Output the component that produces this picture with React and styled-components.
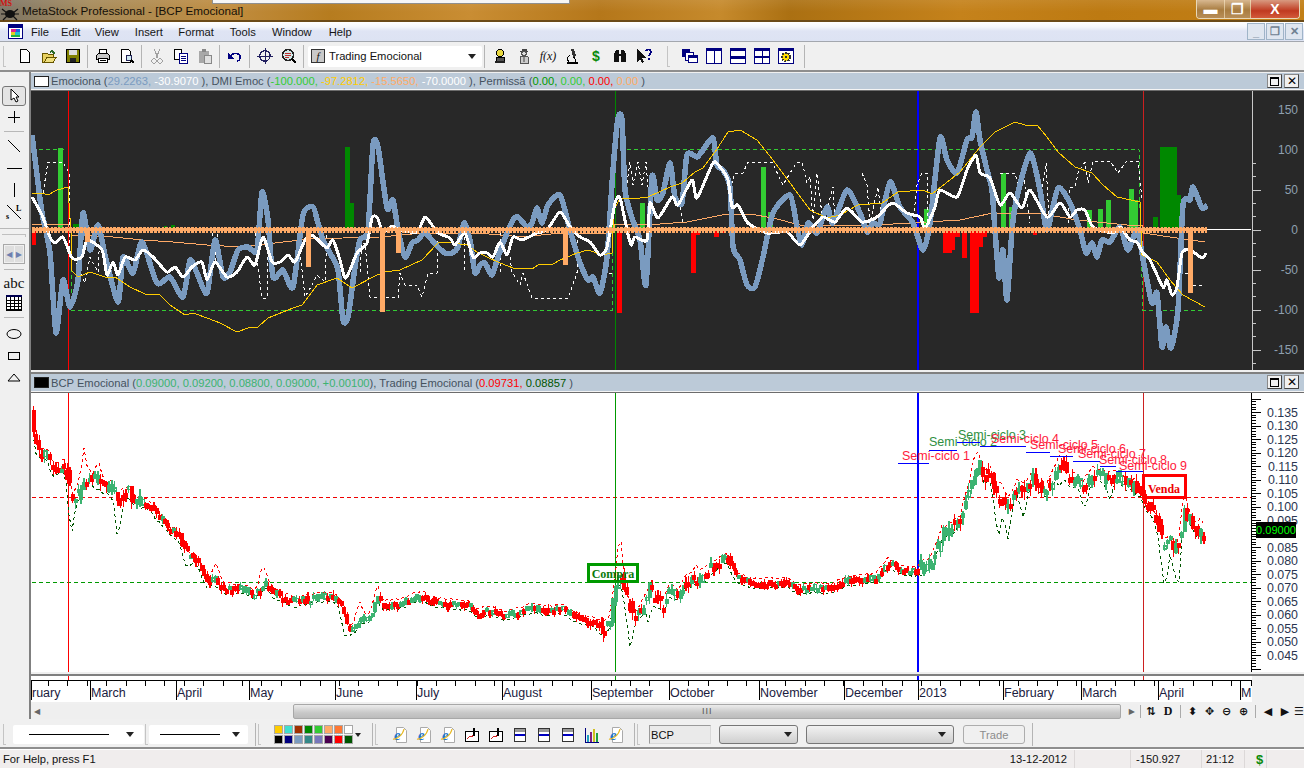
import styled, { createGlobalStyle } from "styled-components"

const GlobalStyle = createGlobalStyle`
  html, body { margin: 0; padding: 0; background: #f0f0f0; }
  * { box-sizing: border-box; }
`

const FONT = `"Liberation Sans", Arial, sans-serif`

const Page = styled.div`
  width: 1304px;
  height: 768px;
  overflow: hidden;
  display: flex;
  flex-direction: column;
  background: #f0f0f0;
  font-family: ${FONT};
  font-size: 11.2px;
  color: #111;
`

/* ---------- title + menu ---------- */
const TitleBar = styled.div`
  position: relative;
  height: 22px;
  flex: none;
  display: flex;
  align-items: center;
  padding-left: 22px;
  font-size: 11.7px;
  color: #151008;
  background:
    linear-gradient(180deg, rgba(255,255,255,.08), rgba(0,0,0,0) 60%),
    linear-gradient(90deg, #7d7566 0, #a58a5a 90px, #c08c3e 230px, #b67c1f 330px, #c98d33 470px, #b5771a 600px, #c68a2c 720px, #ab7012 790px, #c5821b 960px, #bd7a12 1100px, #c27f16 1304px);
  border-bottom: 2px solid #6b4a18;
`
const BehindWindow = styled.div`
  position: absolute;
  left: 212px;
  top: 0;
  width: 358px;
  height: 4px;
  background: #f6f6f6;
  border: 1px solid #8f8f8f;
  border-top: 0;
`
const AppLogo = styled.div`
  position: absolute;
  left: 0;
  top: 1px;
  width: 20px;
  height: 20px;
`
const LogoMark = styled.span`
  position: absolute;
  left: 0;
  top: -2px;
  font: bold 8px "Liberation Serif", serif;
  color: #d01010;
`
const WinButtons = styled.div`
  position: absolute;
  right: 4px;
  top: 0;
  height: 19px;
  display: flex;
  border: 1px solid #e8d8b8;
  border-top: 0;
  border-radius: 0 0 4px 4px;
  overflow: hidden;
`
const WinBtn = styled.div`
  width: ${p => p.$w}px;
  display: flex;
  align-items: center;
  justify-content: center;
  color: #fff;
  font: bold 14px ${FONT};
  background: ${p => p.$close
    ? "linear-gradient(180deg,#d89a80,#c03a20 60%,#d25a3a)"
    : "linear-gradient(180deg,#d8b890,#a87c40 55%,#b88e58)"};
  border-right: 1px solid rgba(255,240,210,.55);
  &:last-child { border-right: 0; }
`
const MenuBar = styled.div`
  height: 20px;
  flex: none;
  position: relative;
  display: flex;
  align-items: center;
  background: linear-gradient(180deg, #ffffff 0, #f4f6fc 5px, #dfe4f4 9px, #dde3f3 100%);
  border-bottom: 1px solid #a3a7ae;
`
const MenuIcon = styled.div`
  width: 15px;
  height: 15px;
  margin: 0 8px 0 8px;
`
const MenuItem = styled.span`
  margin-right: ${p => p.$mr}px;
  color: #161616;
`
const ChildBtns = styled.div`
  position: absolute;
  right: 1px;
  top: 1px;
  display: flex;
  gap: 1px;
`
const ChildBtn = styled.div`
  width: 18px;
  height: 17px;
  display: flex;
  align-items: center;
  justify-content: center;
  border: 1px solid #9fb4c8;
  background: #dfe6f0;
  color: #6f8192;
  font: bold 11px ${FONT};
`

/* ---------- toolbars ---------- */
const ToolBar = styled.div`
  height: 30px;
  flex: none;
  display: flex;
  align-items: center;
  padding: ${p => p.$pt ?? 0}px 0 0 3px;
  background: #f0f0f0;
  border-bottom: 2px solid #8e8e8e;
`
const Grip = styled.div`
  width: 3px;
  height: 21px;
  flex: none;
  margin: 0 ${p => p.$mr ?? 7}px 0 ${p => p.$ml ?? 0}px;
  border-left: 1px solid #c4c4c4;
  border-bottom: 1px solid #c4c4c4;
`
const Sep = styled.div`
  width: 1px;
  height: 23px;
  flex: none;
  margin: 0 ${p => p.$mr ?? 3}px 0 ${p => p.$ml ?? 2}px;
  background: #b4b4b4;
`
const ToolBtn = styled.div`
  width: 24px;
  height: 20px;
  flex: none;
  display: flex;
  align-items: center;
  justify-content: center;
  color: ${p => p.$c || "#111"};
  font: ${p => p.$font || `bold 13px ${FONT}`};
`
const TemplateCombo = styled.div`
  width: 174px;
  height: 21px;
  flex: none;
  margin-left: 1px;
  display: flex;
  align-items: center;
  padding: 0 3px;
  background: #fff;
  border-radius: 2px;
`
const FormulaBox = styled.span`
  width: 14px;
  height: 14px;
  flex: none;
  margin-right: 4px;
  display: flex;
  align-items: center;
  justify-content: center;
  border: 1px solid #333;
  background: #c9c9c9;
  font: italic 11px "Liberation Serif", serif;
`
const Caret = styled.span`
  width: 0;
  height: 0;
  flex: none;
  margin-left: auto;
  margin-right: ${p => p.$mr ?? 1}px;
  border-left: 4px solid transparent;
  border-right: 4px solid transparent;
  border-top: 5px solid #222;
`
const SwatchCaret = styled.span`
  width: 0;
  height: 0;
  flex: none;
  margin: 0 3px 0 2px;
  border-left: 3px solid transparent;
  border-right: 3px solid transparent;
  border-top: 4px solid #222;
`
const LineCombo = styled.div`
  width: ${p => p.$w}px;
  height: 19px;
  flex: none;
  margin-right: ${p => p.$mr ?? 0}px;
  display: flex;
  align-items: center;
  padding: 0 5px 0 ${p => p.$pl}px;
  background: #fff;
  border-radius: 2px;
`
const LineSample = styled.span`
  width: ${p => p.$w}px;
  height: 1px;
  background: #000;
`
const Swatches = styled.div`
  width: 80px;
  flex: none;
  display: grid;
  grid-template-columns: repeat(8, 10px);
  grid-auto-rows: 10px;
`
const Swatch = styled.span`
  margin: 0.5px;
  background: ${p => p.$c};
  border: 1px solid #a8a8a8;
  ${p => p.$on && "outline: 1px dotted #fff;"}
`
const SymbolBox = styled.div`
  width: 62px;
  height: 19px;
  flex: none;
  margin-right: 8px;
  padding: 2px 1px;
  background: #eaeaea;
  border: 1px solid #9a9a9a;
  border-right-color: #d8d8d8;
  border-bottom-color: #d8d8d8;
  line-height: 14px;
`
const DropDown = styled.div`
  width: ${p => p.$w}px;
  height: 19px;
  flex: none;
  margin-right: ${p => p.$mr}px;
  display: flex;
  align-items: center;
  padding-right: 4px;
  background: linear-gradient(180deg, #f2f2f2, #cfcfcf);
  border: 1px solid #777;
  border-radius: 3px;
`
const TradeBtn = styled.div`
  width: 62px;
  height: 19px;
  flex: none;
  display: flex;
  align-items: center;
  justify-content: center;
  border: 1px solid #adadad;
  border-radius: 3px;
  color: #8c8c8c;
`
const StatusBar = styled.div`
  height: 19px;
  flex: 1;
  display: flex;
  align-items: center;
  background: #f0eded;
  border-top: 1px solid #fff;
  font-size: 11.2px;
`
const StatusCell = styled.div`
  width: ${p => p.$w}px;
  flex: ${p => (p.$w ? "none" : 1)};
  height: 100%;
  display: flex;
  align-items: center;
  justify-content: ${p => p.$between ? "space-between" : "flex-start"};
  padding: 0 ${p => p.$between ? 7 : 3}px 0 ${p => p.$pl ?? 3}px;
  border-right: 1px solid #dcd8d8;
  &:last-child { border-right: 0; }
`
const StatusDollar = styled.span`
  margin-left: 8px;
  color: #0a8a0a;
  font: bold 13px ${FONT};
`

/* ---------- workspace ---------- */
const Workspace = styled.div`
  height: 647px;
  flex: none;
  display: flex;
`
const SideBar = styled.div`
  width: 31px;
  flex: none;
  display: flex;
  flex-direction: column;
  align-items: center;
  padding: 14px 1px 0 0;
  background: #f0f0f0;
  border-right: 2px solid #808080;
`
const SideBtn = styled.div`
  width: ${p => p.$active ? 24 : 22}px;
  height: ${p => p.$h ?? 22}px;
  flex: none;
  display: flex;
  align-items: center;
  justify-content: center;
  ${p => p.$active && "background:#e4e4e4;border:1px solid #777;border-radius:3px;"}
  font: 15px "Liberation Serif", serif;
`
const SideRule = styled.div`
  flex: none;
  width: ${p => p.$full ? 30 : 20}px;
  height: 1px;
  margin: ${p => p.$my ?? 2}px 0;
  background: #b8b8b8;
`
const SideGrip = styled.div`
  width: 24px;
  height: 3px;
  flex: none;
  border-top: 1px solid #c0c0c0;
  border-right: 1px solid #c0c0c0;
`
const SideSpin = styled.div`
  width: 22px;
  height: 20px;
  flex: none;
  margin: 7px 0 3px;
  display: flex;
  justify-content: center;
  gap: 1px;
  padding: 1px;
  border: 1px solid #a8a8a8;
  color: #6e7fb0;
  font: 8px "DejaVu Sans", sans-serif;
`
const SpinCell = styled.span`
  flex: 1;
  display: flex;
  align-items: center;
  justify-content: center;
  background: #dedede;
`
const Main = styled.div`
  flex: 1;
  min-width: 0;
  display: flex;
  flex-direction: column;
  padding-top: 1px;
`
const PanelHead = styled.div`
  height: ${p => p.$h}px;
  flex: none;
  position: relative;
  display: flex;
  align-items: center;
  padding-left: 3px;
  background: #bccad8;
  white-space: pre;
  font-size: 11.2px;
  color: #45525f;
`
const PanelSwatch = styled.span`
  width: 15px;
  height: 11px;
  flex: none;
  margin-right: 2px;
  background: ${p => p.$c};
  border: 1px solid #222;
`
const Val = styled.span`
  color: ${p => p.$c};
`
const PanelBtns = styled.div`
  position: absolute;
  right: 5px;
  top: 1px;
  display: flex;
  gap: 2px;
`
const PanelBtn = styled.div`
  width: 15px;
  height: 14px;
  display: flex;
  align-items: center;
  justify-content: center;
  background: #f0f0f0;
  border: 1px solid #8a8a8a;
  border-right-color: #444;
  border-bottom-color: #444;
  color: #000;
  font: 12px ${FONT};
`
const MaxGlyph = styled.span`
  width: 9px;
  height: 9px;
  border: 1px solid #000;
  border-top-width: 2px;
`
const HeadRule = styled.div`
  height: ${p => p.$h}px;
  flex: none;
  background: #f4f4f4;
  border-bottom: 1px solid #6c6c6c;
`
const GapRule = styled.div`
  height: ${p => p.$h}px;
  flex: none;
  background: #f0f0f0;
  border-bottom: 2px solid #808080;
`
const ChartSvg = styled.svg`
  display: block;
  flex: none;
  width: 1273px;
  height: ${p => p.$h}px;
  background: ${p => p.$bg};
`
const AxisRow = styled.div`
  height: 26px;
  flex: none;
  display: flex;
  background: #f0f0f0;
`
const AxisSvg = styled.svg`
  display: block;
  width: 1221px;
  height: 26px;
  background: #fff;
`
const ScrollRow = styled.div`
  height: 16px;
  flex: none;
  margin-top: 1px;
  display: flex;
  align-items: center;
`
const ScrollTrack = styled.div`
  width: 1107px;
  height: 15px;
  flex: none;
  display: flex;
  align-items: center;
  padding: 0 3px;
  background: #efefef;
  color: #666;
  font: 8px "DejaVu Sans", sans-serif;
`
const ScrollThumb = styled.div`
  width: 828px;
  height: 15px;
  margin-left: 253px;
  display: flex;
  align-items: center;
  justify-content: center;
  background: linear-gradient(180deg, #ececec, #c8c8c8 60%, #bcbcbc);
  border: 1px solid #a8a8a8;
  border-radius: 2px;
  color: #555;
  font: 9px ${FONT};
  letter-spacing: 1px;
`
const ScrollEnd = styled.span`
  margin-left: auto;
`
const ZoomTools = styled.div`
  flex: 1;
  display: flex;
  align-items: center;
`
const ZoomTool = styled.span`
  width: ${p => p.$w ?? 17}px;
  flex: none;
  text-align: center;
  color: #111;
  font: ${p => p.$font || `bold 11px "DejaVu Sans", sans-serif`};
`
const ZoomSep = styled.span`
  width: 1px;
  height: 13px;
  flex: none;
  margin: 0 ${p => p.$m ?? 4}px;
  background: #aaa;
`

/* ---------- chart data (page coordinates) ---------- */
const emociona = "32,135 37,175 42,213 50,253 56,333 63,280 70,307 78,280 83,213 90,250 98,225 105,255 118,302 123,257 133,273 142,242 157,283 170,277 183,297 190,260 197,273 207,293 215,240 223,277 230,272 238,250 248,247 257,250 262,192 268,220 273,277 283,270 293,287 303,215 313,207 318,223 323,240 330,253 338,270 343,320 348,317 355,267 360,240 368,230 373,145 378,147 387,208 393,200 398,230 405,257 412,243 418,240 425,233 438,247 445,253 452,253 458,247 464,223 470,240 475,273 480,265 485,263 492,275 498,257 507,233 513,220 518,217 527,227 532,223 537,208 542,223 548,205 560,195 570,230 580,263 588,280 593,277 600,293 607,257 613,170 618,118 622,120 625,190 632,218 640,240 646,285 652,177 657,200 663,193 670,163 675,197 682,203 687,155 697,157 703,150 713,138 717,165 723,170 730,187 733,247 740,260 747,285 755,287 763,257 773,213 790,195 797,227 802,245 808,223 817,233 827,207 833,223 847,190 860,213 867,232 873,223 880,223 890,182 900,207 913,223 923,250 930,223 940,138 947,160 957,173 967,140 972,137 976,112 980,140 987,170 992,190 995,230 999,278 1003,250 1007,300 1012,230 1017,197 1030,153 1040,190 1047,230 1058,188 1070,203 1080,230 1086,253 1092,243 1097,257 1102,240 1110,242 1120,227 1128,250 1137,230 1145,270 1152,303 1157,293 1162,347 1166,327 1171,348 1178,310 1183,205 1190,200 1193,187 1202,208 1207,205"
const dmiWhite = "32,197 42,215 50,237 55,243 63,237 72,258 82,257 87,240 102,250 107,275 113,262 118,275 125,257 135,260 143,250 153,257 167,272 175,267 183,277 192,267 202,262 207,280 215,262 227,277 237,272 247,257 255,265 263,237 272,262 280,262 288,255 295,262 305,240 312,235 320,242 327,248 333,240 340,260 345,278 350,270 357,253 367,243 372,218 377,217 382,230 387,230 392,226 400,230 417,232 425,217 432,225 438,233 450,238 455,245 465,233 473,257 480,253 487,253 493,257 500,242 507,255 513,237 522,240 537,233 547,230 560,212 570,227 580,237 590,242 600,255 607,247 615,203 620,198 627,230 631,245 635,237 647,240 650,203 658,218 672,197 678,205 692,180 697,198 713,163 720,167 728,180 732,207 738,205 748,223 767,233 787,232 800,245 813,227 823,217 835,222 847,208 862,222 877,217 892,203 907,213 920,217 925,228 935,207 940,190 957,197 967,170 976,155 980,173 990,178 1000,205 1010,193 1022,208 1030,190 1047,217 1060,203 1070,217 1077,210 1085,210 1093,227 1113,233 1120,227 1130,240 1137,242 1143,253 1150,260 1163,287 1167,280 1172,295 1177,287 1182,253 1190,250 1202,258 1206,253"
const yellowLine = "32,194 42,193 48,195 57,190 68,187 71,233 71,270 78,277 90,272 105,277 115,277 130,287 145,294 160,295 170,305 185,315 193,313 207,318 220,323 237,332 248,328 258,327 268,318 283,312 293,308 302,305 312,292 317,285 337,278 352,288 377,275 385,272 400,270 422,260 438,243 447,242 467,245 477,252 487,257 500,263 513,268 532,269 538,265 553,264 560,260 577,253 588,250 602,255 612,253 614,210 620,198 640,198 648,197 670,187 682,183 695,172 703,168 715,152 728,132 740,130 757,140 773,160 793,187 810,210 827,218 840,215 858,205 882,203 898,192 923,190 932,194 960,172 980,147 995,132 1015,122 1025,125 1037,125 1047,137 1058,152 1075,167 1092,173 1103,185 1117,197 1140,202 1142,255 1157,262 1170,280 1183,295 1205,307"
const orangeLine = "32,224 50,224 68,224 72,235 113,237 143,240 173,242 207,245 240,247 260,245 283,242 310,239 343,238 380,237 423,233 477,233 523,237 560,233 612,233 615,224 660,224 687,222 727,214 750,214 773,218 800,225 877,225 910,223 960,220 993,213 1043,214 1077,220 1127,225 1142,225 1143,233 1177,238 1205,242"
const whiteDashes = [
  "43,193 48,162 63,162 69,173 69,247 85,283 90,257 98,272 100,233",
  "212,233 215,262 218,233",
  "255,233 258,267 262,298 267,298 268,233",
  "298,233 305,297 312,285 317,275 325,282 327,233",
  "360,272 362,243 365,243 370,297 398,298 400,273 405,285 417,285 422,297 428,273 437,273 438,240",
  "464,237 465,273",
  "500,233 500,273",
  "510,257 512,272 520,285 523,273 532,298 568,298 577,273 578,237",
  "607,233 607,273 612,273",
  "627,183 630,162 633,185 638,162 642,185 646,162 648,187 650,210",
  "680,207 683,225",
  "730,190 735,173 743,173 748,162 772,162 783,185 790,173 797,162 802,162 807,183 810,177 813,220 817,173 823,223 833,187 835,223",
  "862,173 867,185 870,223 878,187 882,223",
  "913,223 917,185 922,173 927,173 928,223",
  "1000,173 1015,173 1018,185 1023,173 1030,223",
  "1042,187 1046,163 1048,200 1048,223",
  "1068,223 1070,187 1075,187 1078,173 1085,162 1088,183 1093,161 1110,161 1118,173 1127,161 1138,161 1142,200",
  "1185,273 1189,273",
  "1193,285 1203,285",
]
const greenDashes = [
  "32,149.5 65,149.5",
  "71,240 71,310 612,310 612,233 614,170",
  "620,149.5 1139,149.5 1140,210 1143,310 1205,310",
]
// x, width, top or bottom
const limeBars = [[58,5,148],[640,5,203],[761,5,167],[768,5,212],[924,5,209],[1001,5,173],[1009,5,207],[1087,5,210],[1098,5,209],[1106,5,200],[1129,5,189],[1134,4,200]]
const darkBars = [[345,5,147],[350,4,203],[1153,5,217],[1160,17,147],[1177,4,195],[73,9,224],[164,3,226],[171,4,225]]
const redBars = [[32,4,245],[617,5,313],[691,5,273],[696,4,235],[714,5,237],[723,3,233],[943,9,253],[952,3,250],[955,5,237],[962,5,258],[970,9,313],[979,4,247],[983,4,237],[1033,4,235]]
const orangeBars = [[85,5,242],[306,5,267],[380,5,312],[396,5,253],[563,5,265],[1188,5,293]]

const rangeStep = (from, to, step) => {
  const out = []
  for (let v = from; v <= to + 0.001; v += step) out.push(v)
  return out
}

// catmull-rom through the points, the thick lines are not angular in the picture
const smooth = str => {
  const pts = str.split(" ").map(s => s.split(",").map(Number))
  let d = `M${pts[0][0]} ${pts[0][1]}`
  for (let i = 0; i < pts.length - 1; i++) {
    const a = pts[Math.max(i - 1, 0)]
    const b = pts[i]
    const c = pts[i + 1]
    const e = pts[Math.min(i + 2, pts.length - 1)]
    d += `C${b[0] + (c[0] - a[0]) / 9} ${b[1] + (c[1] - a[1]) / 9} ${c[0] - (e[0] - b[0]) / 9} ${c[1] - (e[1] - b[1]) / 9} ${c[0]} ${c[1]}`
  }
  return d
}

const priceKeys = [[32,425],[37,450],[40,453],[43,453],[48,457],[52,468],[57,470],[62,465],[65,468],[68,480],[71,497],[77,495],[82,490],[83,477],[88,477],[98,482],[105,488],[113,487],[117,500],[122,497],[127,490],[133,500],[140,502],[147,503],[157,515],[162,520],[170,530],[178,535],[183,547],[188,555],[197,560],[202,573],[207,582],[215,580],[223,587],[230,588],[238,588],[248,590],[253,595],[260,588],[267,583],[273,592],[283,597],[297,602],[303,600],[320,597],[333,597],[340,603],[347,627],[353,630],[360,620],[370,617],[377,597],[383,605],[400,603],[421,595],[434,602],[469,605],[476,613],[489,610],[507,615],[531,608],[548,610],[562,608],[575,617],[593,622],[603,628],[610,623],[614,590],[620,573],[624,593],[630,608],[634,617],[641,608],[648,600],[649,587],[656,600],[663,605],[670,590],[679,595],[685,580],[699,580],[711,568],[722,558],[727,557],[732,570],[739,578],[751,583],[772,582],[789,583],[799,590],[813,587],[830,588],[847,580],[875,578],[888,562],[899,568],[914,572],[922,566],[930,563],[937,547],[942,533],[952,525],[960,522],[967,497],[973,473],[979,460],[983,477],[990,473],[997,497],[1007,503],[1017,487],[1025,490],[1032,477],[1040,488],[1047,490],[1053,477],[1060,460],[1068,478],[1077,480],[1083,488],[1092,473],[1102,477],[1110,478],[1118,475],[1127,483],[1138,488],[1147,503],[1157,523],[1162,543],[1165,543],[1170,540],[1173,553],[1180,540],[1183,513],[1190,520],[1197,530],[1205,532]]

const priceAt = x => {
  for (let i = 1; i < priceKeys.length; i++) {
    const [x0, y0] = priceKeys[i - 1]
    const [x1, y1] = priceKeys[i]
    if (x <= x1) return y0 + (y1 - y0) * (x - x0) / (x1 - x0)
  }
  return priceKeys[priceKeys.length - 1][1]
}
const swing = x => {
  if (x < 140) return 12
  if (x < 340) return 7
  if (x < 600) return 5.5
  if (x < 720) return 12
  if (x < 920) return 5.5
  return 13
}
let seed = 4711
const rnd = () => {
  seed = (seed * 16807) % 2147483647
  return seed / 2147483647
}
const candles = rangeStep(33, 1205, 2.8).map(x => {
  const y = priceAt(x)
  const prev = priceAt(x - 2.8)
  const v = swing(x)
  const open = prev + (rnd() - 0.5) * v
  const close = y + (rnd() - 0.5) * v
  const top = Math.min(open, close)
  const down = close >= open - 0.6
  const h = Math.max(Math.abs(close - open), down ? 5 : 3)
  return { x, top, h, down, hi: top - rnd() * v * 0.6, lo: top + h + rnd() * v * 0.6 }
})
const bump = (x, list) => list.reduce((sum, [c, m]) => sum + m * Math.exp(-((x - c) ** 2) / 14), 0)
const upBumps = [[83,25],[99,15],[216,14],[263,15],[359,15],[377,10],[620,34],[650,8],[697,8],[975,10],[1000,12],[1185,14],[1200,8]]
const lowBumps = [[71,30],[118,28],[186,8],[344,12],[630,30],[650,18],[998,30],[1008,30],[1023,24],[1060,18],[1085,15],[1110,15],[1165,38],[1178,34]]
const upperEnv = rangeStep(33, 1205, 3).map(x => `${x},${(priceAt(x) - 3 - rnd() * swing(x) * 0.4 - bump(x, upBumps)).toFixed(1)}`).join(" ")
const lowerEnv = rangeStep(33, 1205, 3).map(x => `${x},${(priceAt(x) + 4 + rnd() * swing(x) * 0.4 + bump(x, lowBumps)).toFixed(1)}`).join(" ")

const semi = [
  ["Semi-ciclo 1", 902, 460, "#ff1a3c", 898, 929, 463],
  ["Semi-ciclo 2", 929, 446, "#2f8f3f", 929, 957, 450],
  ["Semi-ciclo 3", 958, 439, "#2f8f3f", 957, 980, 442],
  ["Semi-ciclo 4", 991, 443, "#ff1a3c", 980, 1026, 446],
  ["Semi-ciclo 5", 1030, 449, "#ff1a3c", 1026, 1050, 452],
  ["Semi-ciclo 6", 1058, 453, "#ff1a3c", 1050, 1073, 456],
  ["Semi-ciclo 7", 1078, 458, "#ff1a3c", 1073, 1100, 461],
  ["Semi-ciclo 8", 1099, 464, "#ff1a3c", 1100, 1116, 466],
  ["Semi-ciclo 9", 1119, 470, "#ff1a3c", 1116, 1143, 471],
]
const months = [["ruary",32],["March",91],["April",177],["May",250],["June",336],["July",417],["August",503],["September",592],["October",670],["November",760],["December",845],["2013",919],["February",1004],["March",1082],["April",1159],["M",1241]]
const row1 = ["#ffcc00","#40e0d0","#a03000","#008800","#33cc33","#ffaa66","#ff7733","#ffffff"]
const row2 = ["#000000","#000080","#7a9bc0","#338888","#7777bb","#4b0050","#ff0000","#005500"]

const Icon = ({ children, size = 16 }) => (
  <svg width={size} height={size} viewBox="0 0 16 16" shapeRendering="crispEdges">{children}</svg>
)
const NewIcon = () => <Icon><path d="M3.5 1.5h6l3 3v10h-9z" fill="#fff" stroke="#000" /></Icon>
const OpenIcon = () => <Icon><path d="M1.5 5.5h5l1 1h5v8h-11z" fill="#e8d060" stroke="#665500" /><path d="M3 14.5l3-5h9l-3 5z" fill="#f0e080" stroke="#665500" /><path d="M9 3c2-2 3-1 4 1l1-1v3h-3l1-1c-1-1-2-1-3 0z" fill="#2a6a2a" /></Icon>
const SaveIcon = () => <Icon><path d="M1.5 1.5h13v13h-13z" fill="#808000" stroke="#000" /><path d="M4 2h8v5H4z" fill="#ddd" /><path d="M5 10h6v4H5z" fill="#222" /></Icon>
const PrintIcon = () => <Icon><path d="M4.5 1.5h7v5h-7z" fill="#fff" stroke="#000" /><path d="M1.5 7.5l2-2h9l2 2v4h-13z" fill="#c8c8c8" stroke="#000" /><path d="M3.5 10.5h9v4h-9z" fill="#fff" stroke="#000" /><path d="M5 12h6v1H5z" fill="#000" /></Icon>
const PreviewIcon = () => <Icon><path d="M2.5 1.5h7l2 2v11h-9z" fill="#fff" stroke="#000" /><circle cx="10" cy="10" r="3" fill="#cfe8f0" stroke="#225" /><path d="M12 12l3 3" stroke="#000" strokeWidth="2" /></Icon>
const CutIcon = () => <Icon><path d="M5 1l4 9M11 1L7 10" stroke="#a0a0a0" fill="none" /><circle cx="5" cy="13" r="2.2" fill="none" stroke="#a0a0a0" /><circle cx="11" cy="13" r="2.2" fill="none" stroke="#a0a0a0" /></Icon>
const CopyIcon = () => <Icon><path d="M1.5 1.5h7v10h-7z" fill="#fff" stroke="#000" /><path d="M6.5 5.5h8v10h-8z" fill="#fff" stroke="#000080" /><path d="M8 8h5M8 10h5M8 12h5" stroke="#000080" /></Icon>
const PasteIcon = () => <Icon><path d="M2 3h10v12H2z" fill="#a8a8a8" /><path d="M5 1h4v3H5z" fill="#888" /><path d="M7.5 7.5h7v8h-7z" fill="#e0e0e0" stroke="#888" /></Icon>
const UndoIcon = () => <Icon><path d="M3 9c2-4 8-5 10-1 1 3-1 5-3 5" fill="none" stroke="#000080" strokeWidth="1.6" /><path d="M1 5v6h6z" fill="#000080" /></Icon>
const CrossIcon = () => <Icon><circle cx="8" cy="8" r="5.2" fill="none" stroke="#222060" strokeWidth="1.2" /><path d="M8 0v16M0 8h16" stroke="#222060" /></Icon>
const FindIcon = () => <Icon><circle cx="7" cy="7" r="5.4" fill="#cfe8e8" stroke="#222" strokeWidth="1.4" /><path d="M4 5h6M4 7h6M4 9h4" stroke="#c03030" /><path d="M11 11l4 4" stroke="#000" strokeWidth="2.2" /></Icon>
const PawnIcon = () => <Icon><circle cx="8" cy="5" r="3.8" fill="#e8d840" stroke="#000" /><path d="M4 9h8v4H4z" fill="#555" stroke="#000" /><path d="M3 13h10v2H3z" fill="#222" /></Icon>
const ManIcon = () => <Icon><path d="M4 3h8M6 1h4v2H6z" stroke="#444" fill="#444" /><circle cx="8" cy="5.5" r="2.2" fill="#ddd" stroke="#555" /><path d="M4 15V9l4-1 4 1v6z" fill="#ccc" stroke="#555" /><path d="M7 9h2v5H7z" fill="#888" /></Icon>
const ScopeIcon = () => <Icon><path d="M7 1h3l2 7-3 1z" fill="#333" /><path d="M3 14.5h11" stroke="#000" strokeWidth="2" /><path d="M6 7c-3 2-3 5-1 7M9 9c2 1 3 3 2 5" stroke="#000" fill="none" /></Icon>
const BinoIcon = () => <Icon><path d="M2 6l2-4h3v4h2V2h3l2 4v8H9V8H7v6H2z" fill="#111" /></Icon>
const HelpArrowIcon = () => <Icon><path d="M1 1v13l3-3 2 4 2-1-2-4h4z" fill="#111" /><path d="M10 3c1-2 5-2 5 1 0 2-2 2-2 4M13 10v2" stroke="#000080" strokeWidth="1.6" fill="none" /></Icon>
const NavyFrame = ({ children }) => <Icon><rect x=".5" y=".5" width="15" height="15" fill="#fff" stroke="#000080" /><rect x="0" y="0" width="16" height="3" fill="#000080" />{children}</Icon>
const CascadeIcon = () => <Icon><path d="M0 1h8v8H0z" fill="#000080" /><path d="M3 4h8v8H3z" fill="#fff" stroke="#000080" /><path d="M6.5 7.5h9v7h-9z" fill="#fff" stroke="#000080" /><path d="M6 7h10v3H6z" fill="#000080" /></Icon>
const VTileIcon = () => <NavyFrame><path d="M8 0v16" stroke="#000080" /></NavyFrame>
const HTileIcon = () => <NavyFrame><path d="M0 8h16v3H0z" fill="#000080" /></NavyFrame>
const GridIcon = () => <NavyFrame><path d="M8 0v16" stroke="#000080" /><path d="M0 8h16v2H0z" fill="#000080" /></NavyFrame>
const GearIcon = () => <NavyFrame><circle cx="8" cy="9" r="4.2" fill="#ffdd00" stroke="#333" strokeDasharray="2 1" strokeWidth="1.6" /><circle cx="8" cy="9" r="1.2" fill="#333" /></NavyFrame>
const IeIcon = () => (
  <svg width="17" height="18" viewBox="0 0 17 18">
    <path d="M4.5 1.5h7l3 3v12h-10z" fill="#fff" stroke="#aaa" />
    <text x="2" y="14" fontSize="15" fontWeight="bold" fontStyle="italic" fontFamily="Liberation Serif" fill="#1e78d0">e</text>
    <path d="M1 13c3 1 10-4 11-10" stroke="#e8b820" fill="none" strokeWidth="1.2" />
  </svg>
)
const OneChartIcon = () => <Icon><path d="M1.5 4.5h13v10h-13z" fill="#fff" stroke="#000" /><path d="M3 12l3-3 2 1 3-5" stroke="#d02020" fill="none" /><path d="M9 1h2v8H9z" fill="#000" /></Icon>
const WindowIcon = () => <Icon><path d="M2.5 1.5h11v13h-11z" fill="#fff" stroke="#333" /><path d="M3 2h10v3H3z" fill="#999" /><path d="M3 7h10v2H3z" fill="#0000c0" /></Icon>
const BarsIcon = () => <Icon><path d="M1 1v14h14" stroke="#000080" fill="none" /><path d="M3 8h2v7H3z" fill="#20a0c0" /><path d="M6 5h2v10H6z" fill="#802080" /><path d="M9 2h2v13H9z" fill="#d0c020" /><path d="M12 6h2v9h-2z" fill="#20a040" /></Icon>

const bars = (list, color, down) => list.map(([x, w, edge]) => (
  <rect key={`${x}${color}`} x={x} width={w} y={down ? 230 : edge} height={down ? edge - 230 : 230 - edge} fill={color} />
))

const App = () => (
  <Page>
    <GlobalStyle />
    <TitleBar>
      <BehindWindow />
      <AppLogo>
        <svg width="20" height="20" viewBox="0 0 20 20">
          <ellipse cx="10" cy="13" rx="5" ry="4" fill="#111" />
          <path d="M2 8l5 4M1 13h5M3 19l4-4M18 8l-5 4M19 13h-5M17 19l-4-4" stroke="#111" fill="none" strokeWidth="1.2" />
        </svg>
        <LogoMark>MS</LogoMark>
      </AppLogo>
      MetaStock Professional - [BCP Emocional]
      <WinButtons>
        <WinBtn $w={28}>▬</WinBtn>
        <WinBtn $w={26}>❐</WinBtn>
        <WinBtn $w={48} $close>X</WinBtn>
      </WinButtons>
    </TitleBar>

    <MenuBar>
      <MenuIcon>
        <svg width="15" height="15" viewBox="0 0 15 15" shapeRendering="crispEdges">
          <rect x=".5" y=".5" width="14" height="14" fill="#fff" stroke="#000080" />
          <rect x="1" y="1" width="13" height="3" fill="#000080" />
          <rect x="3" y="5" width="5" height="3" fill="#e02090" />
          <rect x="8" y="5" width="4" height="3" fill="#2060e0" />
          <rect x="3" y="8" width="4" height="3" fill="#e0d020" />
          <rect x="7" y="8" width="5" height="3" fill="#20c0d0" />
          <rect x="3" y="11" width="9" height="2" fill="#20b040" />
        </svg>
      </MenuIcon>
      <MenuItem $mr={12}>File</MenuItem>
      <MenuItem $mr={14.5}>Edit</MenuItem>
      <MenuItem $mr={16}>View</MenuItem>
      <MenuItem $mr={15.5}>Insert</MenuItem>
      <MenuItem $mr={16}>Format</MenuItem>
      <MenuItem $mr={16}>Tools</MenuItem>
      <MenuItem $mr={17}>Window</MenuItem>
      <MenuItem $mr={0}>Help</MenuItem>
      <ChildBtns>
        <ChildBtn>_</ChildBtn>
        <ChildBtn>❐</ChildBtn>
        <ChildBtn>✕</ChildBtn>
      </ChildBtns>
    </MenuBar>

    <ToolBar>
      <Grip />
      <ToolBtn><NewIcon /></ToolBtn>
      <ToolBtn><OpenIcon /></ToolBtn>
      <ToolBtn><SaveIcon /></ToolBtn>
      <Sep />
      <ToolBtn><PrintIcon /></ToolBtn>
      <ToolBtn><PreviewIcon /></ToolBtn>
      <Sep />
      <ToolBtn><CutIcon /></ToolBtn>
      <ToolBtn><CopyIcon /></ToolBtn>
      <ToolBtn><PasteIcon /></ToolBtn>
      <Sep />
      <ToolBtn><UndoIcon /></ToolBtn>
      <Sep />
      <ToolBtn><CrossIcon /></ToolBtn>
      <ToolBtn><FindIcon /></ToolBtn>
      <Sep />
      <TemplateCombo>
        <FormulaBox>f</FormulaBox>
        Trading Emocional
        <Caret $mr={3} />
      </TemplateCombo>
      <Sep />
      <ToolBtn><PawnIcon /></ToolBtn>
      <ToolBtn><ManIcon /></ToolBtn>
      <ToolBtn $font={`italic 12px "Liberation Serif", serif`}>f(x)</ToolBtn>
      <ToolBtn><ScopeIcon /></ToolBtn>
      <ToolBtn $c="#0a8a0a" $font={`bold 14px ${FONT}`}>$</ToolBtn>
      <ToolBtn><BinoIcon /></ToolBtn>
      <ToolBtn><HelpArrowIcon /></ToolBtn>
      <Grip $ml={11} $mr={8} />
      <ToolBtn><CascadeIcon /></ToolBtn>
      <ToolBtn><VTileIcon /></ToolBtn>
      <ToolBtn><HTileIcon /></ToolBtn>
      <ToolBtn><GridIcon /></ToolBtn>
      <ToolBtn><GearIcon /></ToolBtn>
      <Sep $ml={6} />
    </ToolBar>

    <Workspace>
      <SideBar>
        <SideBtn $active $h={20}>
          <svg width="16" height="16" viewBox="0 0 16 16"><path d="M5 1v11l3-2 2 4 2-1-2-4h3z" fill="#fff" stroke="#000" /></svg>
        </SideBtn>
        <SideBtn><svg width="16" height="16" viewBox="0 0 16 16" shapeRendering="crispEdges"><path d="M8 2v12M2 8h12" stroke="#000" /></svg></SideBtn>
        <SideRule $my={3} />
        <SideBtn><svg width="16" height="16" viewBox="0 0 16 16"><path d="M2 2l12 12" stroke="#000" /></svg></SideBtn>
        <SideBtn><svg width="16" height="16" viewBox="0 0 16 16" shapeRendering="crispEdges"><path d="M1 8h15" stroke="#000" /></svg></SideBtn>
        <SideBtn><svg width="16" height="16" viewBox="0 0 16 16" shapeRendering="crispEdges"><path d="M8 1v14" stroke="#000" /></svg></SideBtn>
        <SideBtn><svg width="18" height="18" viewBox="0 0 18 18"><path d="M2 2l14 14" stroke="#000" /><text x="1" y="16" fontSize="8" fontFamily="Liberation Serif" fontWeight="bold">s</text><text x="11" y="8" fontSize="8" fontFamily="Liberation Serif" fontWeight="bold">L</text></svg></SideBtn>
        <SideRule $full $my={5} />
        <SideGrip />
        <SideSpin><SpinCell>◀</SpinCell><SpinCell>▶</SpinCell></SideSpin>
        <SideRule />
        <SideBtn>abc</SideBtn>
        <SideBtn $h={18}>
          <svg width="16" height="16" viewBox="0 0 16 16" shapeRendering="crispEdges">
            <rect x=".5" y=".5" width="15" height="15" fill="#fff" stroke="#000" />
            <rect x="0" y="0" width="16" height="2" fill="#000050" />
            <path d="M4 2v14M8 2v14M12 2v14M0 5h16M0 8h16M0 11h16M0 14h16" stroke="#000" />
          </svg>
        </SideBtn>
        <SideRule $my={5} />
        <SideBtn><svg width="16" height="12" viewBox="0 0 16 12"><ellipse cx="8" cy="6" rx="7" ry="4.5" fill="none" stroke="#000" /></svg></SideBtn>
        <SideBtn><svg width="16" height="12" viewBox="0 0 16 12" shapeRendering="crispEdges"><rect x="2.5" y="2.5" width="11" height="7" fill="none" stroke="#000" /></svg></SideBtn>
        <SideBtn><svg width="16" height="12" viewBox="0 0 16 12"><path d="M8 2l6 7H2z" fill="none" stroke="#000" /></svg></SideBtn>
      </SideBar>

      <Main>
        <PanelHead $h={16}>
          <PanelSwatch $c="#fff" />
          Emociona (<Val $c="#7a9bc0">29.2263, </Val><Val $c="#fff">-30.9070 </Val>), DMI Emoc (<Val $c="#33cc33">-100.000, </Val><Val $c="#ffcc00">-97.2812, </Val><Val $c="#ffaa66">-15.5650, </Val><Val $c="#fff">-70.0000 </Val>), Permissã (<Val $c="#009900">0.00, </Val><Val $c="#33cc33">0.00, </Val><Val $c="#ff0000">0.00, </Val><Val $c="#ffaa66">0.00 </Val>)
          <PanelBtns><PanelBtn><MaxGlyph /></PanelBtn><PanelBtn>✕</PanelBtn></PanelBtns>
        </PanelHead>
        <HeadRule $h={2} />
        <ChartSvg $h={279} $bg="#282828" viewBox="31 91 1273 279" shapeRendering="crispEdges">
          <path d="M68.5 91v279" stroke="#ff0000" />
          <path d="M615.5 91v279" stroke="#008800" />
          <path d="M918 91v279" stroke="#0000ff" strokeWidth="2" />
          <path d="M1143.5 91v279" stroke="#cc2020" />
          {bars(limeBars, "#33cc33")}
          {bars(darkBars, "#008800")}
          {bars(redBars, "#ff0000", true)}
          {greenDashes.map(p => <polyline key={p} points={p} fill="none" stroke="#33cc33" strokeDasharray="4 3" />)}
          {whiteDashes.map(p => <polyline key={p} points={p} fill="none" stroke="#fff" strokeDasharray="3 3" />)}
          <polyline points={orangeLine} fill="none" stroke="#ffaa66" />
          <path d={smooth(emociona)} fill="none" stroke="#7a9bc0" strokeWidth="5.5" strokeLinejoin="round" />
          <polyline points={yellowLine} fill="none" stroke="#ffcc00" />
          <path d={smooth(dmiWhite)} fill="none" stroke="#fff" strokeWidth="3" strokeLinejoin="round" />
          <path d="M1207 229.5h44" stroke="#fff" />
          <path d="M32 229.5h1175" stroke="#ffaa66" strokeWidth="3.4" />
          <path d="M32 229.5h1175" stroke="#ffaa66" strokeWidth="6" strokeDasharray="2.5 1.2" />
          {bars(orangeBars, "#ffaa66", true)}
          <path d="M1252.5 91v279" stroke="#c8c8c8" />
          {rangeStep(-7, 11, 1).map(i => {
            const y = Math.round(349.5 - i * 40 / 3 - 40) + 0.5
            return <path key={i} d={`M1252 ${y}h${i % 3 === 0 ? 9 : 4}`} stroke="#c8c8c8" />
          })}
          {[150, 100, 50, 0, -50, -100, -150].map(v => (
            <text key={v} x="1298" y={234 - v * 0.8} textAnchor="end" fontSize="12" fontFamily="Liberation Sans" fill="#8fa0b0">{v}</text>
          ))}
        </ChartSvg>

        <GapRule $h={4} />
        <PanelHead $h={17}>
          <PanelSwatch $c="#000" />
          BCP Emocional (<Val $c="#3cb371">0.09000, 0.09200, 0.08800, 0.09000, +0.00100</Val>), Trading Emocional (<Val $c="#ff0000">0.09731, </Val><Val $c="#005500">0.08857 </Val>)
          <PanelBtns><PanelBtn><MaxGlyph /></PanelBtn><PanelBtn>✕</PanelBtn></PanelBtns>
        </PanelHead>
        <HeadRule $h={2} />
        <ChartSvg $h={279} $bg="#fff" viewBox="31 393 1273 279" shapeRendering="crispEdges">
          <path d="M32 497.5h1220" stroke="#ee0000" strokeDasharray="4 3" />
          <path d="M32 582.5h1220" stroke="#009900" strokeDasharray="4 3" />
          <path d="M68.5 393v279" stroke="#ff0000" />
          <path d="M615.5 393v279" stroke="#009900" />
          <path d="M918 393v279" stroke="#0000ff" strokeWidth="2" />
          <path d="M1143.5 393v279" stroke="#cc2020" />
          <polyline points={upperEnv} fill="none" stroke="#ff0000" strokeDasharray="3 3" />
          <polyline points={lowerEnv} fill="none" stroke="#005500" strokeDasharray="3 3" />
          <path d="M603.5 618v24" stroke="#ff0000" strokeWidth="1.5" />
          {candles.map(c => c.down ? (
            <g key={c.x}>
              <path d={`M${c.x + 0.5} ${c.hi}V${c.lo}`} stroke="#ff0000" strokeWidth="1.2" />
              <rect x={c.x - 1.5} y={c.top} width="4" height={c.h} fill="#ff0000" />
            </g>
          ) : (
            <g key={c.x}>
              <path d={`M${c.x + 0.5} ${c.hi}V${c.lo}`} stroke="#3cb371" strokeWidth="1.4" />
              <rect x={c.x - 0.5} y={c.top} width="2.6" height={c.h} fill="none" stroke="#3cb371" strokeWidth="1.4" />
            </g>
          ))}
          {semi.map(([label, x, y, color, x0, x1, ly]) => (
            <g key={label}>
              <text x={x} y={y} fontSize="12.5" fontFamily="Liberation Sans" fill={color} shapeRendering="auto">{label}</text>
              <path d={`M${x0} ${ly}.5H${x1}`} stroke="#0000ff" />
            </g>
          ))}
          <rect x="588.5" y="564.5" width="49" height="17" fill="none" stroke="#009900" strokeWidth="3" />
          <text x="613" y="578" textAnchor="middle" fontSize="12" fontWeight="bold" fontFamily="Liberation Serif" fill="#0a7a0a">Compra</text>
          <rect x="1143.5" y="475.5" width="42" height="22" fill="none" stroke="#ff0000" strokeWidth="3" />
          <text x="1164" y="493" textAnchor="middle" fontSize="12" fontWeight="bold" fontFamily="Liberation Serif" fill="#ee0000">Venda</text>
          <rect x="1252" y="393" width="52" height="279" fill="#fff" />
          <path d="M1251.5 393v279" stroke="#000" />
          {rangeStep(0, 100, 1).map(i => {
            const y = Math.round(398.5 + i * 2.7) + 0.5
            return y < 672 ? <path key={i} d={`M1252 ${y}h${i % 5 === 0 ? 9 : 4}`} stroke="#000" /> : null
          })}
          {rangeStep(0, 18, 1).filter(i => i !== 9).map(i => (
            <text key={i} x="1298" y={416.5 + i * 13.5} textAnchor="end" fontSize="12.4" fontFamily="Liberation Sans" fill="#2a3550">{(0.135 - i * 0.005).toFixed(3)}</text>
          ))}
          <rect x="1256" y="522" width="40" height="16" fill="#000" />
          <text x="1276" y="534" textAnchor="middle" fontSize="11" fontFamily="Liberation Sans" fill="#00ff00">0.09000</text>
        </ChartSvg>

        <GapRule $h={4} />
        <AxisRow>
          <AxisSvg viewBox="31 676 1221 26" shapeRendering="crispEdges">
            <path d="M68.5 676v4" stroke="#ff0000" />
            <path d="M615.5 676v4" stroke="#009900" />
            <path d="M918 676v4" stroke="#0000ff" strokeWidth="2" />
            <path d="M1143.5 676v4" stroke="#cc2020" />
            <path d="M31 680.5h1221" stroke="#000" />
            {rangeStep(0, 63, 1).map(i => <path key={i} d={`M${Math.round(48 + i * 19.4) + 0.5} 680v6`} stroke="#000" />)}
            {months.map(([m, x]) => (
              <g key={m + x}>
                <path d={`M${x - 1}.5 680v20`} stroke="#000" />
                <text x={x} y="697" fontSize="12.5" fontFamily="Liberation Sans" fill="#1a2040">{m}</text>
              </g>
            ))}
          </AxisSvg>
        </AxisRow>
        <ScrollRow>
          <ScrollTrack>
            ◀
            <ScrollThumb>III</ScrollThumb>
            <ScrollEnd>▶</ScrollEnd>
          </ScrollTrack>
          <ZoomSep $m={2} />
          <ZoomTools>
            <ZoomTool $w={16}>⇅</ZoomTool>
            <ZoomTool $w={18} $font={`bold 12px "Liberation Serif", serif`}>D</ZoomTool>
            <ZoomSep $m={3} />
            <ZoomTool>⬍</ZoomTool>
            <ZoomTool>✥</ZoomTool>
            <ZoomTool>⊖</ZoomTool>
            <ZoomTool>⊕</ZoomTool>
            <ZoomSep $m={3} />
            <ZoomTool $w={18}>◀</ZoomTool>
            <ZoomTool $w={16}>▶</ZoomTool>
            <ZoomTool $w={12}>☰</ZoomTool>
          </ZoomTools>
        </ScrollRow>
      </Main>
    </Workspace>

    <ToolBar $pt={3}>
      <Grip />
      <LineCombo $w={131} $pl={16}><LineSample $w={80} /><Caret $mr={5} /></LineCombo>
      <Grip $ml={1} $mr={1} />
      <LineCombo $w={99} $pl={11}><LineSample $w={60} /><Caret $mr={3} /></LineCombo>
      <Sep $ml={7} $mr={2} />
      <Grip $mr={12} />
      <Swatches>
        {row1.map(c => <Swatch key={c} $c={c} />)}
        {row2.map(c => <Swatch key={c} $c={c} $on={c === "#ff0000"} />)}
      </Swatches>
      <SwatchCaret />
      <Sep $ml={8} $mr={2} />
      <Grip $mr={10} />
      <ToolBtn><IeIcon /></ToolBtn>
      <ToolBtn><IeIcon /></ToolBtn>
      <ToolBtn><IeIcon /></ToolBtn>
      <ToolBtn><OneChartIcon /></ToolBtn>
      <ToolBtn><OneChartIcon /></ToolBtn>
      <ToolBtn><WindowIcon /></ToolBtn>
      <ToolBtn><WindowIcon /></ToolBtn>
      <ToolBtn><WindowIcon /></ToolBtn>
      <ToolBtn><BarsIcon /></ToolBtn>
      <ToolBtn><IeIcon /></ToolBtn>
      <Sep $ml={6} $mr={2} />
      <Grip $mr={9} />
      <SymbolBox>BCP</SymbolBox>
      <DropDown $w={79} $mr={8}><Caret /></DropDown>
      <DropDown $w={148} $mr={9}><Caret $mr={3} /></DropDown>
      <TradeBtn>Trade</TradeBtn>
      <Sep $ml={7} />
    </ToolBar>

    <StatusBar>
      <StatusCell $w={1075} $between>
        <span>For Help, press F1</span>
        <span>13-12-2012</span>
      </StatusCell>
      <StatusCell $w={56} />
      <StatusCell $w={71} $pl={5}>-150.927</StatusCell>
      <StatusCell $w={43} $pl={4}>21:12</StatusCell>
      <StatusCell $w={22}><StatusDollar>$</StatusDollar></StatusCell>
      <StatusCell />
    </StatusBar>
  </Page>
)

export default App
